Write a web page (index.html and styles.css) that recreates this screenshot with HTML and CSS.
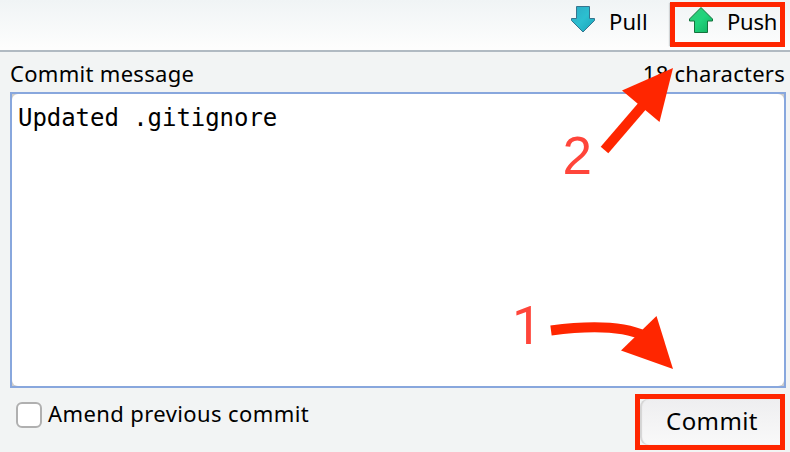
FILE: index.html
```html
<!DOCTYPE html>
<html lang="en">
<head>
<meta charset="utf-8">
<title>Commit</title>
<link rel="stylesheet" href="styles.css">
</head>
<body>
<header class="toolbar">
  <div class="tool pull">
    <svg class="icon" width="26" height="28" viewBox="0 0 26 28">
      <defs>
        <linearGradient id="blue" x1="0" y1="0" x2="1" y2="1"><stop offset="0" stop-color="#2ba9c4"/><stop offset=".5" stop-color="#2cbfd0"/><stop offset="1" stop-color="#18a2b8"/></linearGradient>
        <linearGradient id="green" x1="0" y1="0" x2="1" y2="1"><stop offset="0" stop-color="#2fca78"/><stop offset=".5" stop-color="#20d47c"/><stop offset="1" stop-color="#10ad5e"/></linearGradient>
      </defs>
      <path d="M6.500 1.500h13v12h5v2L13 27 1.500 15.500v-2h5z" fill="url(#blue)" stroke="#35758f"/>
    </svg>
    <span>Pull</span>
  </div>
  <div class="tool push">
    <svg class="icon" width="26" height="28" viewBox="0 0 26 28">
      <path d="M13 .500 24.500 12v2h-5v11.500h-13V14h-5v-2z" fill="url(#green)" stroke="#14733d"/>
    </svg>
    <span>Push</span>
  </div>
</header>
<main class="panel">
  <div class="labels">
    <span class="title">Commit message</span>
    <span class="count">18 characters</span>
  </div>
  <div class="editor"><div class="message">Updated .gitignore</div></div>
  <footer class="actions">
    <label class="amend"><span class="box"></span><span>Amend previous commit</span></label>
    <div class="commit"><div class="face">Commit</div></div>
  </footer>
</main>
<svg class="notes" width="790" height="452" viewBox="0 0 790 452">
  <path d="M604.500 150 650 97" class="shaft"/>
  <path d="M673 68 622 90.500 659.500 122z" class="head"/>
  <path d="M551 330.500Q615 322 645 336" class="shaft"/>
  <path d="M673 369 621 350.500 656.500 316z" class="head"/>
  <text x="562.500" y="174">2</text>
  <text x="512" y="344" class="one">1</text>
</svg>
</body>
</html>
```
FILE: styles.css
```css
* { box-sizing: border-box; }
body {
  margin: 0;
  width: 790px;
  height: 452px;
  overflow: hidden;
  background: #f2f4f4;
  color: #000;
  font: 22px/28px "Noto Sans", sans-serif;
  white-space: nowrap;
}
.toolbar {
  display: flex;
  justify-content: flex-end;
  height: 52px;
  padding-right: 5px;
  background: linear-gradient(#f0f4f5, #fdfdfd 48px);
  border-bottom: 2px solid #b1bac2;
}
.tool { display: flex; }
.icon { flex: none; }
.pull { width: 100px; padding-top: 5px; }
.pull span { margin: 2px 0 0 13px; letter-spacing: .1px; }
.push {
  width: 115px;
  height: 45px;
  margin-top: 2px;
  padding-left: 13px;
  border: 5px solid #ff2600;
  box-shadow: -2px 0 1px -1px #d0d4d6;
}
.push span { letter-spacing: -.2px; margin-left: 13px; }
.panel { padding: 7px 4px 0 10px; }
.labels {
  display: flex;
  justify-content: space-between;
  height: 33px;
  padding-right: 1px;
}
.title { letter-spacing: .3px; }
.count { letter-spacing: .25px; }
.editor {
  height: 296px;
  border: 2px solid #88a7dd;
  background: #ccc;
}
.message {
  height: 100%;
  padding: 10px 6px;
  border-radius: 6px;
  background: #fff;
  font: 24px/28px "DejaVu Sans Mono", monospace;
  letter-spacing: -.05px;
}
.actions { display: flex; justify-content: space-between; padding: 6px 1px 0 6px; }
.amend { display: flex; padding-top: 5px; letter-spacing: .4px; }
.box {
  width: 26px;
  height: 26px;
  margin: 3px 6px 0 0;
  border: 2px solid #b0b0b0;
  border-radius: 6px;
  background: #fff;
}
.commit {
  width: 150px;
  height: 56px;
  border: 5px solid #ff2600;
}
.face {
  height: 46px;
  padding-left: 4px;
  border-radius: 8px 0 0 8px;
  background: linear-gradient(#eeeef0, #f9f9f9);
  box-shadow: inset 2px 0 1px #d4d4d4;
  font-size: 24px;
  line-height: 43px;
  text-align: center;
  letter-spacing: .4px;
}
.notes { position: absolute; inset: 0; }
.shaft { fill: none; stroke: #ff2600; stroke-width: 10; }
.head { fill: #ff2600; }
.notes text { fill: #ff453a; font: 53px "Liberation Sans", sans-serif; }
.notes .one { font-family: Roboto, sans-serif; }
```
